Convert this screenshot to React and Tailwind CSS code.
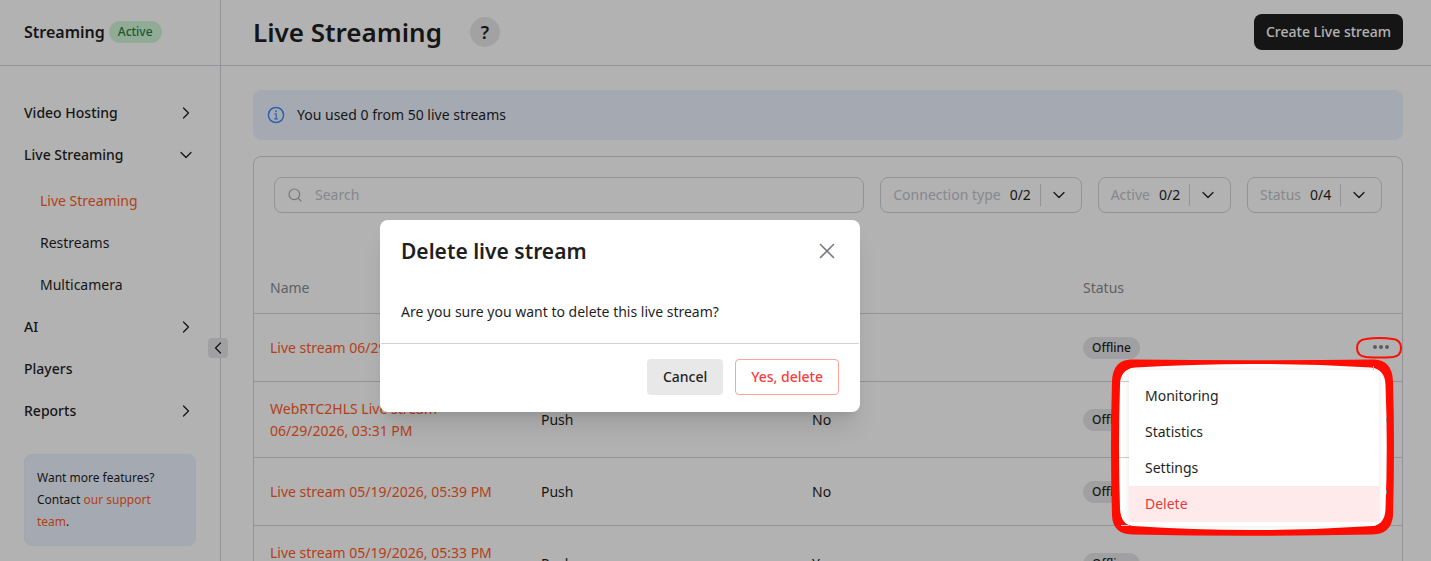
import { ChevronDown, ChevronLeft, ChevronRight, Search, X } from "lucide-react";

const navItems = [
  { label: "Video Hosting", icon: "right" },
  { label: "Live Streaming", icon: "down", children: ["Live Streaming", "Restreams", "Multicamera"] },
  { label: "AI", icon: "right" },
  { label: "Players" },
  { label: "Reports", icon: "right" },
];

const filters = [
  { id: "connection", label: "Connection type", value: "0/2" },
  { id: "active", label: "Active", value: "0/2" },
  { id: "status", label: "Status", value: "0/4" },
];

const streams = [
  { name: "Live stream 06/29/2026, 03:35 PM", type: "Push", active: "No" },
  { name: "WebRTC2HLS Live stream 06/29/2026, 03:31 PM", type: "Push", active: "No" },
  { name: "Live stream 05/19/2026, 05:39 PM", type: "Push", active: "No" },
  { name: "Live stream 05/19/2026, 05:33 PM (copy)", type: "Push", active: "Yes" },
];

const menuItems = ["Monitoring", "Statistics", "Settings"];

function Dots() {
  return (
    <svg width="16" height="4" viewBox="0 0 16 4" fill="#85868c">
      <circle cx="2" cy="2" r="2" />
      <circle cx="8" cy="2" r="2" />
      <circle cx="14" cy="2" r="2" />
    </svg>
  );
}

function InfoIcon() {
  return (
    <svg width="18" height="18" viewBox="0 0 18 18" fill="none" stroke="#3f8ef5" strokeWidth="1.5">
      <circle cx="9" cy="9" r="7.6" />
      <path d="M7.4 7.8H9.2V12.6M7.2 12.8H11" strokeWidth="1.2" />
      <circle cx="9" cy="5.2" r="0.9" fill="#3f8ef5" stroke="none" />
    </svg>
  );
}

function Sidebar() {
  return (
    <aside className="relative w-[221px] shrink-0 border-r border-[#d1d3d8]">
      <div className="flex h-[66px] items-center gap-1 border-b border-[#d1d3d8] pb-[2px] pl-6">
        <span className="text-base font-semibold">Streaming</span>
        <span className="rounded-full bg-[#d2f5d9] px-[9px] text-xs leading-[22px] font-medium text-[#1f8344]">Active</span>
      </div>
      <nav className="pt-[26px]">
        {navItems.map((item) => (
          <div key={item.label}>
            <button className="flex h-[42px] w-full items-center justify-between pr-6 pl-6 font-medium">
              {item.label}
              {item.icon === "right" && <ChevronRight size={20} strokeWidth={1.5} />}
              {item.icon === "down" && <ChevronDown size={20} strokeWidth={1.5} />}
            </button>
            {item.children && (
              <div className="pt-1">
                {item.children.map((child, i) => (
                  <a key={child} href="#" className={i === 0 ? "flex h-[42px] items-center pl-10 text-[#ff5b27]" : "flex h-[42px] items-center pl-10"}>
                    {child}
                  </a>
                ))}
              </div>
            )}
          </div>
        ))}
      </nav>
      <div className="mx-6 mt-[22px] rounded-lg border border-[#e8f0fc] bg-[#edf4ff] p-3 text-xs leading-[22px]">
        Want more features? Contact <a href="#" className="text-[#ff5b27]">our support team</a>.
      </div>
      <button aria-label="Collapse" className="absolute top-[338px] -right-2 flex size-5 items-center justify-center rounded bg-[#e6e6ea]">
        <ChevronLeft size={20} strokeWidth={1.5} />
      </button>
    </aside>
  );
}

function Filter({ id, label, value }) {
  return (
    <div className="flex h-9 shrink-0 items-center rounded-lg border border-[#d1d3d8] px-3">
      <label htmlFor={id} className="text-[#c2c3c9]">{label}</label>
      <select id={id} className="ml-[9px] appearance-none bg-transparent">
        <option>{value}</option>
      </select>
      <span className="mr-2 ml-2 h-[22px] w-px bg-[#d1d3d8]" />
      <ChevronDown size={20} strokeWidth={1.5} />
    </div>
  );
}

function StreamTable() {
  return (
    <table className="mt-[50px] w-full table-fixed text-left">
      <thead>
        <tr className="h-[50px] border-b border-[#d1d3d8] text-[#8a8b90]">
          <th className="w-[271px] px-4 font-normal">Name</th>
          <th className="w-[271px] px-4 font-normal">Type</th>
          <th className="w-[271px] px-4 font-normal">Active</th>
          <th className="w-[271px] px-4 font-normal">Status</th>
          <th aria-label="Actions" />
        </tr>
      </thead>
      <tbody>
        {streams.map((s) => (
          <tr key={s.name} className="h-[68px] border-b border-[#d1d3d8]">
            <td className="px-4 pt-4 pb-[15px]"><a href="#" className="text-[#ff5b27]">{s.name}</a></td>
            <td className="px-4 pt-px">{s.type}</td>
            <td className="px-4 pt-px">{s.active}</td>
            <td className="px-4 pt-px">
              <span className="inline-block rounded-full bg-[#e6e6ea] px-[9px] text-xs leading-[22px] font-medium">Offline</span>
            </td>
            <td className="pr-[13px]">
              <button aria-label="More" className="ml-auto flex h-4 items-center"><Dots /></button>
            </td>
          </tr>
        ))}
      </tbody>
    </table>
  );
}

function DeleteModal() {
  return (
    <div role="dialog" aria-label="Delete live stream" className="absolute top-[220px] left-[380px] w-[480px] rounded-lg bg-white shadow-xl">
      <div className="flex items-center justify-between pt-[15px] pr-5 pl-[21px]">
        <h2 className="text-[21px] leading-8 font-semibold">Delete live stream</h2>
        <button aria-label="Close" className="text-[#77787e]"><X size={26} strokeWidth={1.5} /></button>
      </div>
      <p className="mx-px border-b border-[#d1d3d8] px-5 pt-[34px] pb-5">Are you sure you want to delete this live stream?</p>
      <div className="flex justify-end gap-3 px-[21px] pt-[15px] pb-[17px] font-medium">
        <button className="h-9 rounded bg-[#e8e8e8] px-4">Cancel</button>
        <button className="h-9 rounded border border-[#fba49d] px-[15px] text-[#f5413d]">Yes, delete</button>
      </div>
    </div>
  );
}

function RowMenu() {
  return (
    <div className="absolute top-[359px] left-[1111px] h-[177px] w-[283px]">
      <svg className="absolute inset-0" width="283" height="177" viewBox="0 0 283 177">
        <path
          d="M20 0.5Q141 2 263 0.5Q281 1 282 22Q284 88 282 157Q280 175 262 175.5Q141 178 21 175.5Q2 175 1 157Q-1 88 1 22Q2 1 20 0.5Z"
          fill="#ff0d00"
        />
        <path
          d="M24 8.5Q141 1.5 260 8.5Q274 10 274.5 26Q277 88 274.5 150Q274 165 262 167Q141 175 22 167Q10 166 9 150Q7 88 9 26Q9 10 24 8.5Z"
          fill="#fff"
        />
        <path d="M9 22.5H18M8 98.5H18M10 166.5H18M262.5 7V12" stroke="#c8cad0" />
        <path d="M275.5 59V63M275.5 131V135" stroke="#85868c" />
      </svg>
      <div role="menu" className="absolute top-[11px] left-[18px] w-[250px] rounded-md bg-white pt-2 pb-1 shadow-[0_0_6px_rgba(0,0,0,0.1)]">
        {menuItems.map((label) => (
          <button key={label} role="menuitem" className="block h-9 w-full px-4 text-left">{label}</button>
        ))}
        <button role="menuitem" className="block h-9 w-full bg-[#ffeaeb] px-4 text-left text-[#e5393a]">Delete</button>
      </div>
    </div>
  );
}

export default function App() {
  return (
    <div className="relative h-screen overflow-hidden bg-white font-['Noto_Sans',sans-serif] text-sm leading-[22px] text-[#1f1f1f]">
      <div className="flex min-h-full">
        <Sidebar />
        <main className="min-w-0 flex-1">
          <header className="flex h-[66px] items-center border-b border-[#d1d3d8] pr-7 pb-[2px] pl-8">
            <h1 className="text-[26px] font-semibold">Live Streaming</h1>
            <button aria-label="Help" className="ml-7 size-[30px] rounded-full bg-[#e8e8e8] text-lg font-semibold">?</button>
            <button className="ml-auto h-9 rounded-lg bg-[#1f1f1f] px-3 font-medium text-white">Create Live stream</button>
          </header>
          <div className="pt-6 pr-7 pl-8">
            <div className="flex h-[50px] items-center gap-3 rounded-lg bg-[#edf4ff] px-[14px]">
              <InfoIcon />
              You used 0 from 50 live streams
            </div>
            <div className="mt-4 rounded-lg border border-[#d1d3d8]">
              <div className="flex gap-4 px-5 pt-5">
                <label className="flex h-9 min-w-0 flex-1 items-center gap-3 rounded-lg border border-[#d1d3d8] px-3">
                  <Search size={16} strokeWidth={1.75} color="#a9aab0" />
                  <input aria-label="Search" placeholder="Search" className="min-w-0 flex-1 outline-none placeholder:text-[#c2c3c9]" />
                </label>
                {filters.map((f) => (
                  <Filter key={f.id} {...f} />
                ))}
              </div>
              <StreamTable />
            </div>
          </div>
        </main>
      </div>
      <div className="absolute inset-0 bg-black/30" />
      <svg className="absolute top-[337px] left-[1355px]" width="48" height="22" viewBox="0 0 48 22" fill="none" stroke="#ff0d00" strokeWidth="2">
        <path d="M11 2Q24 0 38 2Q46 3 46 11Q46 19 38 20Q24 21 11 20Q2 19 2 11Q2 3 11 2Z" />
      </svg>
      <RowMenu />
      <DeleteModal />
    </div>
  );
}
